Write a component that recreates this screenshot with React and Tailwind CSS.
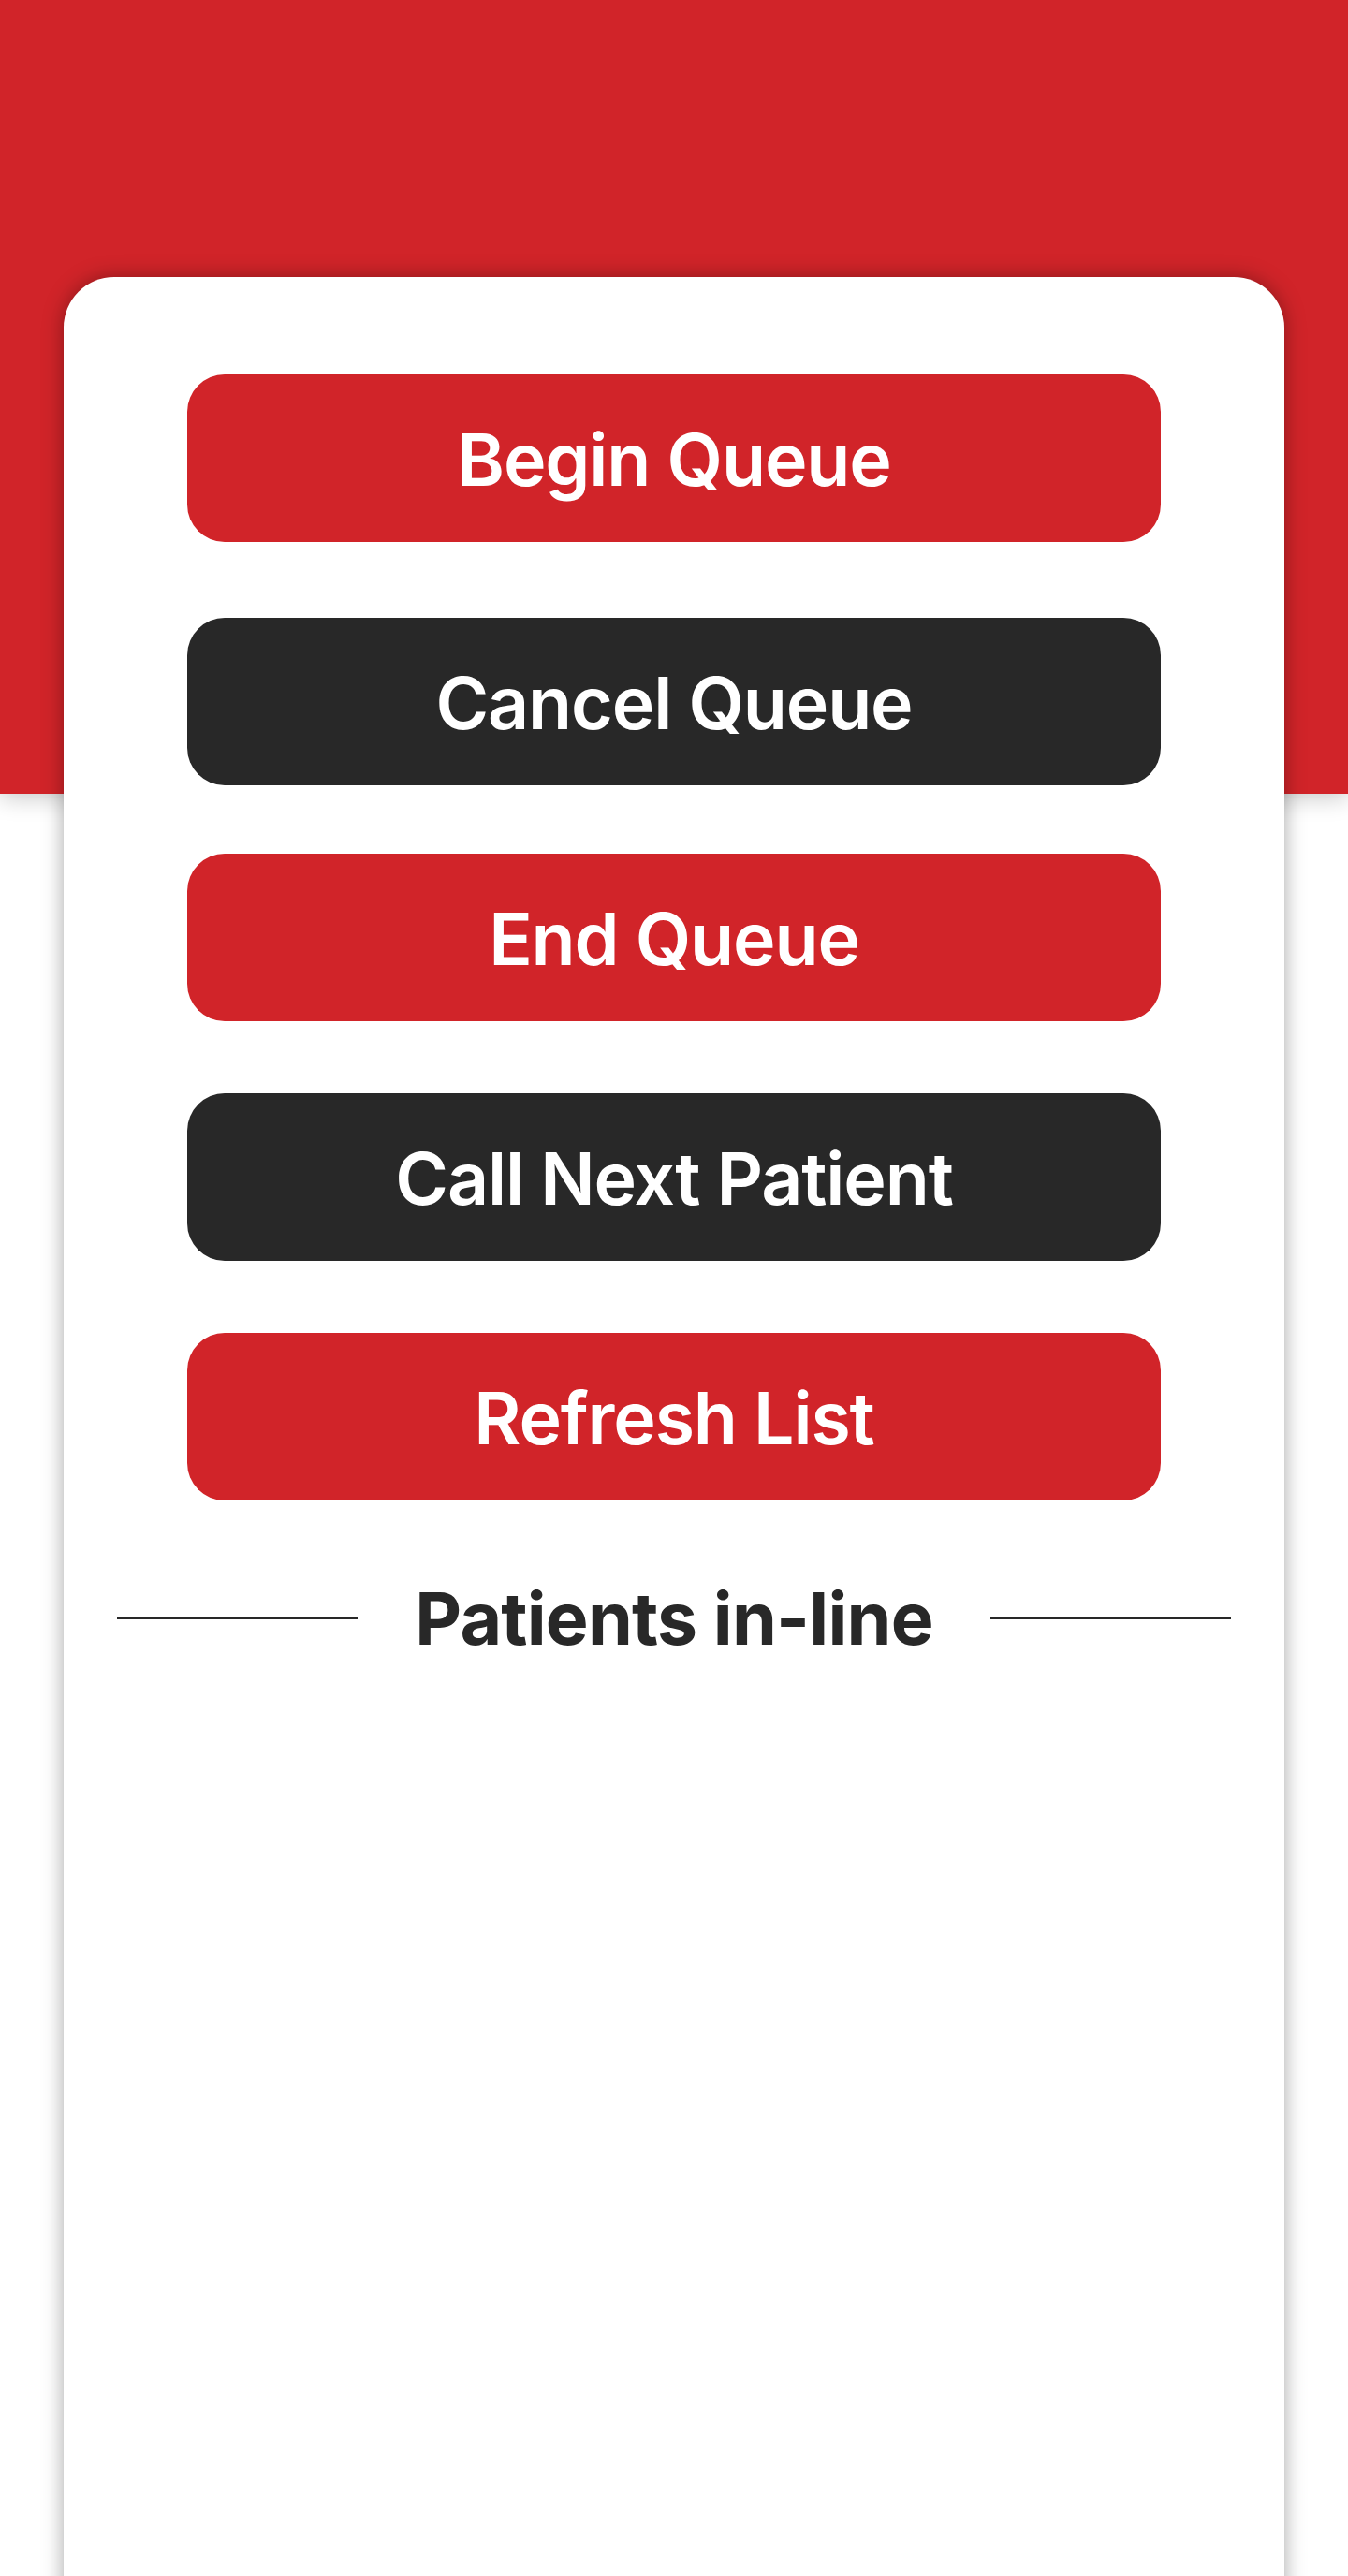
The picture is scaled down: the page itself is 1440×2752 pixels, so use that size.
export default function App() {
  const btn =
    "flex h-[179px] w-full items-center justify-center rounded-[40px] pt-[3px] text-[77px] font-semibold leading-none tracking-[-0.015em] text-white";
  return (
    <div
      className="relative h-[2752px] w-[1440px] overflow-hidden bg-white"
      style={{ fontFamily: "Inter, 'Noto Sans', sans-serif" }}
    >
      <div className="relative z-0 h-[848px] w-full bg-[#d12429] shadow-[0_4px_24px_rgba(0,0,0,0.22)]" />
      <div className="relative z-10 mx-[68px] -mt-[552px] h-[2600px] rounded-t-[54px] bg-white px-[132px] pt-[104px] shadow-[0_0_22px_rgba(0,0,0,0.35)]">
        <div className={`${btn} bg-[#d12429]`}>Begin Queue</div>
        <div className={`${btn} mt-[81px] bg-[#282828]`}>Cancel Queue</div>
        <div className={`${btn} mt-[73px] bg-[#d12429]`}>End Queue</div>
        <div className={`${btn} mt-[77px] bg-[#282828]`}>Call Next Patient</div>
        <div className={`${btn} mt-[77px] bg-[#d12429]`}>Refresh List</div>
        <div className="-mx-[75px] mt-[86px] flex h-[78px] items-center justify-between">
          <div className="h-[3px] w-[257px] bg-[#282828]" />
          <div className="pt-[3px] text-[77px] font-bold leading-none tracking-[-0.01em] text-[#282828]">
            Patients in-line
          </div>
          <div className="h-[3px] w-[257px] bg-[#282828]" />
        </div>
      </div>
    </div>
  );
}
